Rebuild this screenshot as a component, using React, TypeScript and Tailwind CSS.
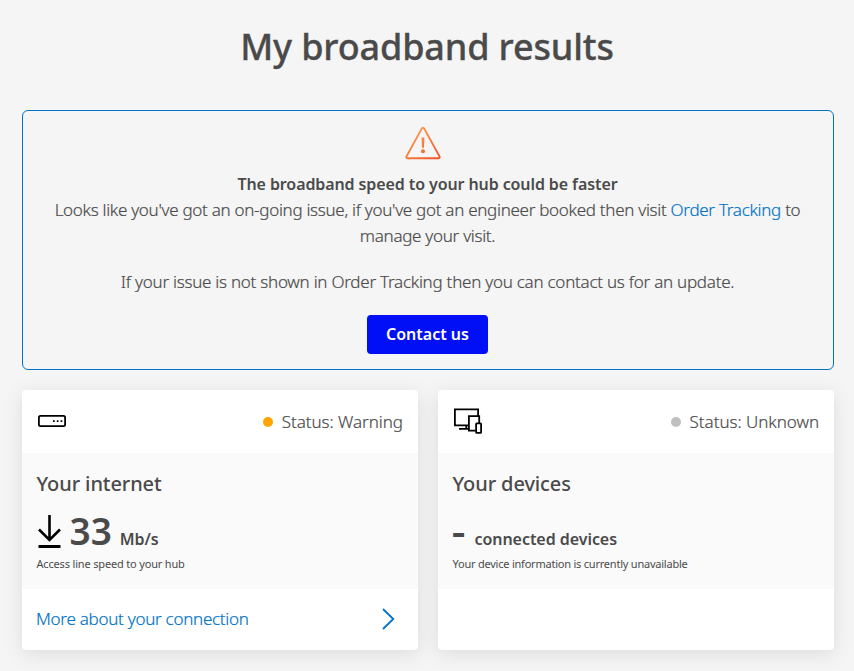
import type { ReactNode } from "react"

type CardProps = {
  icon: ReactNode
  dot: string
  status: string
  title: string
  children: ReactNode
  footer?: ReactNode
}

function WarningIcon() {
  return (
    <svg className="mr-[10px] h-[34px] w-9 shrink-0" viewBox="0 0 36 34" fill="none">
      <defs>
        <linearGradient id="warn" x1="6" y1="2" x2="30" y2="34" gradientUnits="userSpaceOnUse">
          <stop offset="0" stopColor="#ffa14f" />
          <stop offset="1" stopColor="#f0562b" />
        </linearGradient>
      </defs>
      <path d="M16.9 2.4a1.3 1.3 0 0 1 2.2 0L34.6 30.6a1.1 1.1 0 0 1-1 1.6H2.4a1.1 1.1 0 0 1-1-1.6z" stroke="url(#warn)" strokeWidth="1.9" strokeLinejoin="round" />
      <path d="M16.6 11.5h2.8l-.4 10.2h-2z" fill="url(#warn)" />
      <circle cx="18" cy="25.3" r="2" fill="url(#warn)" />
    </svg>
  )
}

function HubIcon() {
  return (
    <svg className="-ml-px h-8 w-8" viewBox="0 0 32 32" fill="none">
      <rect x="2.9" y="9.9" width="26.2" height="10.2" rx="1.6" stroke="#000" strokeWidth="1.8" />
      <path d="M17 14.2h1.7v1.7H17zM20.8 14.2h1.7v1.7h-1.7zM24.6 14.2h1.7v1.7h-1.7z" fill="#000" />
    </svg>
  )
}

function DevicesIcon() {
  return (
    <svg className="-ml-px h-8 w-8" viewBox="0 0 32 32" fill="none" stroke="#000" strokeWidth="1.8">
      <path d="M16.5 19.3H2.9V3.4h23.2v6.5" />
      <path d="M14.3 19.5v3M7 22.8h9.5" />
      <path d="M23.5 24.7h-6.6V10.2h10.3v6.8" />
      <rect x="24.1" y="17.3" width="5" height="9.6" rx=".6" />
    </svg>
  )
}

function Card({ icon, dot, status, title, children, footer }: CardProps) {
  return (
    <section className="flex h-[260px] flex-1 flex-col overflow-hidden rounded bg-white shadow-[0_4px_20px_rgba(0,0,0,0.1)]">
      <div className="flex h-[63px] items-center justify-between px-[15px]">
        {icon}
        <div className="flex items-center">
          <span className={`mr-[9px] h-[10px] w-[10px] rounded-full ${dot}`} />
          <span className="pt-px text-[17px] font-light tracking-[-0.03px] [-webkit-text-stroke:0.2px]">{status}</span>
        </div>
      </div>
      <div className="h-[136px] bg-[#fafafa] pt-[17px] pr-[15px] pl-[14.5px]">
        <h2 className="text-xl leading-7 font-medium tracking-[-0.1px]">{title}</h2>
        {children}
      </div>
      {footer}
    </section>
  )
}

export default function App() {
  return (
    <main className="h-[671px] w-full overflow-hidden bg-[#f5f5f5] px-5 pl-[22px] font-['Noto_Sans',sans-serif] text-[#4a4a4a]">
      <h1 className="pt-[22px] pr-[2px] text-center text-[36px] leading-[50px] font-medium tracking-[-0.15px] [-webkit-text-stroke:0.3px]">My broadband results</h1>

      <section className="mt-[38px] flex h-[260px] flex-col items-center rounded-md border border-[#0073c5] pt-[15px] pr-[25px] pl-6 text-center text-[17px] leading-[26px] font-light tracking-[-0.29px]">
        <WarningIcon />
        <p className="mt-[11px] text-base leading-[26px] font-semibold tracking-[-0.1px]">The broadband speed to your hub could be faster</p>
        <p className="[-webkit-text-stroke:0.2px]">
          Looks like you've got an on-going issue, if you've got an engineer booked then visit{" "}
          <a href="#" className="text-[#0073c5]">Order Tracking</a> to
          <br />
          manage your visit.
        </p>
        <p className="mt-5 tracking-[-0.25px] [-webkit-text-stroke:0.2px]">If your issue is not shown in Order Tracking then you can contact us for an update.</p>
        <button className="mt-5 h-[39px] w-[121px] shrink-0 rounded bg-[#000ff5] pb-0.5 text-base font-semibold tracking-normal text-white">Contact us</button>
      </section>

      <div className="mt-5 flex gap-5">
        <Card
          icon={<HubIcon />}
          dot="bg-[#ffa500]"
          status="Status: Warning"
          title="Your internet"
          footer={
            <a href="#" className="flex flex-1 items-center justify-between pr-[22px] pb-px pl-[14px] text-[17px] font-light tracking-[-0.27px] text-[#0073c5]">
              <span className="[-webkit-text-stroke:0.2px]">More about your connection</span>
              <svg className="h-6 w-4" viewBox="0 0 16 24" fill="none" stroke="#0073c5" strokeWidth="1.8">
                <path d="M3 2 13.3 12 3 22" />
              </svg>
            </a>
          }
        >
          <div className="mt-[11px] flex h-[44px] items-baseline">
            <svg className="h-[33px] w-[25px] self-center" viewBox="0 0 25 33" fill="none" stroke="#000" strokeWidth="3">
              <path d="M12.5 0v25M2 14.5l10.5 10.5L23 14.5" strokeWidth="2.6" />
              <path d="M1.5 31.5h22" />
            </svg>
            <span className="ml-[8px] text-[37px] leading-[44px] font-semibold">33</span>
            <span className="ml-2 text-base font-semibold tracking-[-0.1px]">Mb/s</span>
          </div>
          <p className="mt-[3px] text-[11px] leading-4 tracking-[-0.17px]">Access line speed to your hub</p>
        </Card>

        <Card icon={<DevicesIcon />} dot="bg-[#bfbfbf]" status="Status: Unknown" title="Your devices">
          <div className="mt-[11px] flex h-[44px] items-baseline">
            <span className="w-[14px] origin-left scale-x-115 text-[37px] leading-[44px] font-semibold -indent-px">-</span>
            <span className="ml-[8px] text-base font-semibold tracking-[-0.05px]">connected devices</span>
          </div>
          <p className="mt-[3px] text-[11px] leading-4 tracking-[-0.22px]">Your device information is currently unavailable</p>
        </Card>
      </div>
    </main>
  )
}
